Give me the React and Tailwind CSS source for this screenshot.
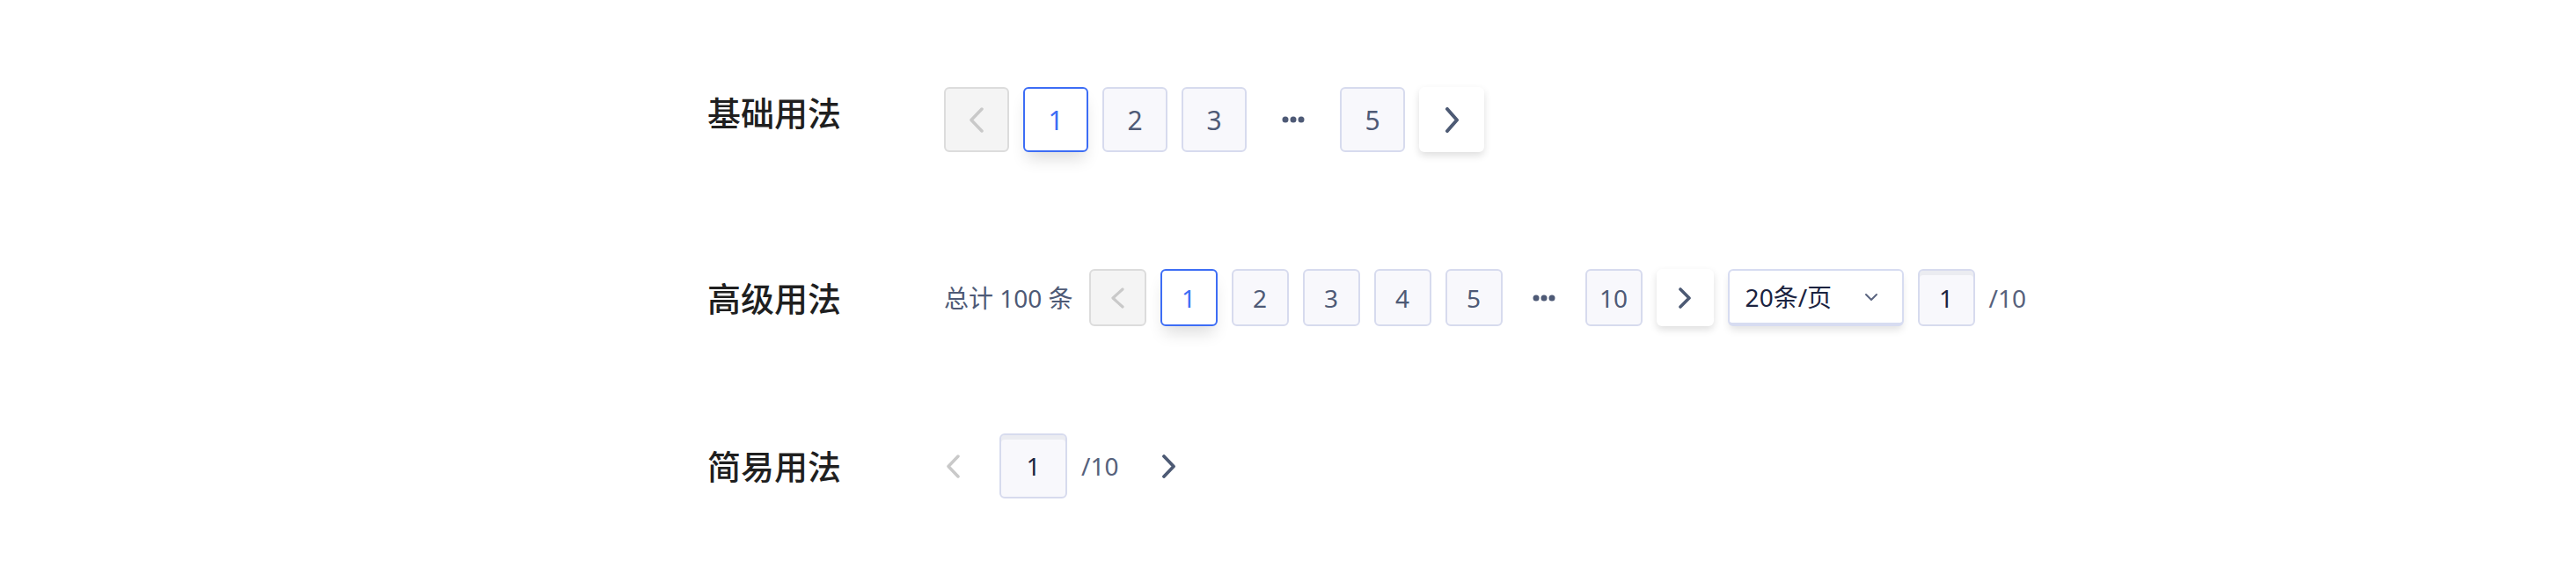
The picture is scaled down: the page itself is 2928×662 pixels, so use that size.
import React from "react";

const font = { fontFamily: '"Noto Sans", "Noto Sans CJK SC", sans-serif' };

const Chevron = ({ dir = "left", w = 16, h = 28, color, stroke = 3.5 }) => {
  const pts =
    dir === "left"
      ? `${w - 3},2 3,${h / 2} ${w - 3},${h - 2}`
      : `3,2 ${w - 3},${h / 2} 3,${h - 2}`;
  return (
    <svg width={w} height={h} viewBox={`0 0 ${w} ${h}`} fill="none">
      <polyline
        points={pts}
        stroke={color}
        strokeWidth={stroke}
        strokeLinecap="round"
        strokeLinejoin="round"
      />
    </svg>
  );
};

const Dots = () => (
  <svg width="26" height="8" viewBox="0 0 26 8">
    <circle cx="4" cy="4" r="3.5" fill="#4e5a76" />
    <circle cx="13" cy="4" r="3.5" fill="#4e5a76" />
    <circle cx="22" cy="4" r="3.5" fill="#4e5a76" />
  </svg>
);

const Title = ({ children, className = "" }) => (
  <div className={`w-[270px] shrink-0 pl-[1px] text-[38px] font-medium text-[#1f1f1f] leading-none ${className}`}>
    {children}
  </div>
);

// page button, two sizes
const PageBtn = ({ n, active, big }) => {
  const size = big ? "w-[74px] h-[74px] text-[30px]" : "w-[65px] h-[65px] text-[28px]";
  if (active) {
    return (
      <button className={`${size} flex items-center justify-center rounded-[6px] border-2 border-[#3d6df5] bg-white text-[#3d6df5] shadow-[0_12px_18px_-4px_rgba(0,0,0,0.13)]`}>
        {n}
      </button>
    );
  }
  return (
    <button className={`${size} flex items-center justify-center rounded-[6px] border-2 border-[#d7dbee] bg-[#f8f8fc] text-[#4e5a76]`}>
      {n}
    </button>
  );
};

const PrevBtn = ({ big }) => (
  <button
    className={`${big ? "w-[74px] h-[74px]" : "w-[65px] h-[65px]"} flex items-center justify-center rounded-[6px] border-2 border-[#dcdcdc] bg-[#f4f4f4]`}
  >
    {big ? (
      <Chevron dir="left" w={18} h={29} color="#c9c9c9" stroke={3.5} />
    ) : (
      <Chevron dir="left" w={17} h={24} color="#c9c9c9" stroke={3.2} />
    )}
  </button>
);

const NextBtn = ({ big }) => (
  <button
    className={`${big ? "w-[74px] h-[74px]" : "w-[65px] h-[65px]"} flex items-center justify-center rounded-[6px] bg-white shadow-[0_4px_8px_rgba(0,0,0,0.13)]`}
  >
    {big ? (
      <Chevron dir="right" w={17} h={29} color="#4d5a74" stroke={4} />
    ) : (
      <Chevron dir="right" w={16} h={24} color="#4d5a74" stroke={3.6} />
    )}
  </button>
);

export default function App() {
  return (
    <div className="w-full h-[662px] bg-white pl-[803px] pt-[99px]" style={font}>
      {/* 基础用法 */}
      <div className="flex items-center h-[74px]">
        <Title className="pb-[16px]">基础用法</Title>
        <div className="flex items-center gap-[16px]">
          <PrevBtn big />
          <PageBtn n="1" active big />
          <PageBtn n="2" big />
          <PageBtn n="3" big />
          <div className="w-[74px] h-[74px] flex items-center justify-center">
            <Dots />
          </div>
          <PageBtn n="5" big />
          <NextBtn big />
        </div>
      </div>

      {/* 高级用法 */}
      <div className="flex items-center h-[65px] mt-[133px]">
        <Title>高级用法</Title>
        <div className="flex items-center gap-[16px]">
          <span className="text-[28px] text-[#4e5a76] mr-[2px]">总计 100 条</span>
          <PrevBtn />
          <PageBtn n="1" active />
          <PageBtn n="2" />
          <PageBtn n="3" />
          <PageBtn n="4" />
          <PageBtn n="5" />
          <div className="w-[62px] h-[65px] flex items-center justify-center">
            <Dots />
          </div>
          <PageBtn n="10" />
          <NextBtn />
          <div className="w-[200px] h-[65px] flex items-center justify-between pl-[18px] pr-[27px] rounded-[6px] border-2 border-b-4 border-[#d7dcf1] bg-white shadow-[0_6px_10px_-2px_rgba(0,0,0,0.12)]">
            <span className="text-[28px] text-[#1b2340]">20条/页</span>
            <svg width="16" height="10" viewBox="0 0 16 10" fill="none">
              <polyline points="2,2 8,8 14,2" stroke="#5b6580" strokeWidth="2" strokeLinecap="round" strokeLinejoin="round" />
            </svg>
          </div>
          <div className="w-[65px] h-[65px] flex items-center justify-center rounded-[6px] border-2 border-[#d7dbee] bg-[#f8f8fc] shadow-[inset_0_5px_0_#ebecf1] text-[28px] text-[#1b2340]">
            1
          </div>
          <span className="text-[28px] text-[#56617c]">/10</span>
        </div>
      </div>

      {/* 简易用法 */}
      <div className="flex items-center h-[74px] mt-[122px]">
        <Title>简易用法</Title>
        <div className="flex items-center">
          <button className="w-[47px] h-[74px] flex items-center justify-start pl-[2px]">
            <Chevron dir="left" w={17} h={27} color="#c9c9c9" stroke={3.5} />
          </button>
          <div className="ml-[16px] w-[77px] h-[74px] flex items-center justify-center rounded-[6px] border-2 border-[#d7dbee] bg-[#f8f8fc] shadow-[inset_0_5px_0_#ebecf1] text-[28px] text-[#1b2340]">
            1
          </div>
          <span className="ml-[16px] text-[28px] text-[#56617c]">/10</span>
          <button className="ml-[16px] w-[82px] h-[74px] flex items-center justify-center">
            <Chevron dir="right" w={17} h={27} color="#4d5a74" stroke={3.8} />
          </button>
        </div>
      </div>
    </div>
  );
}
